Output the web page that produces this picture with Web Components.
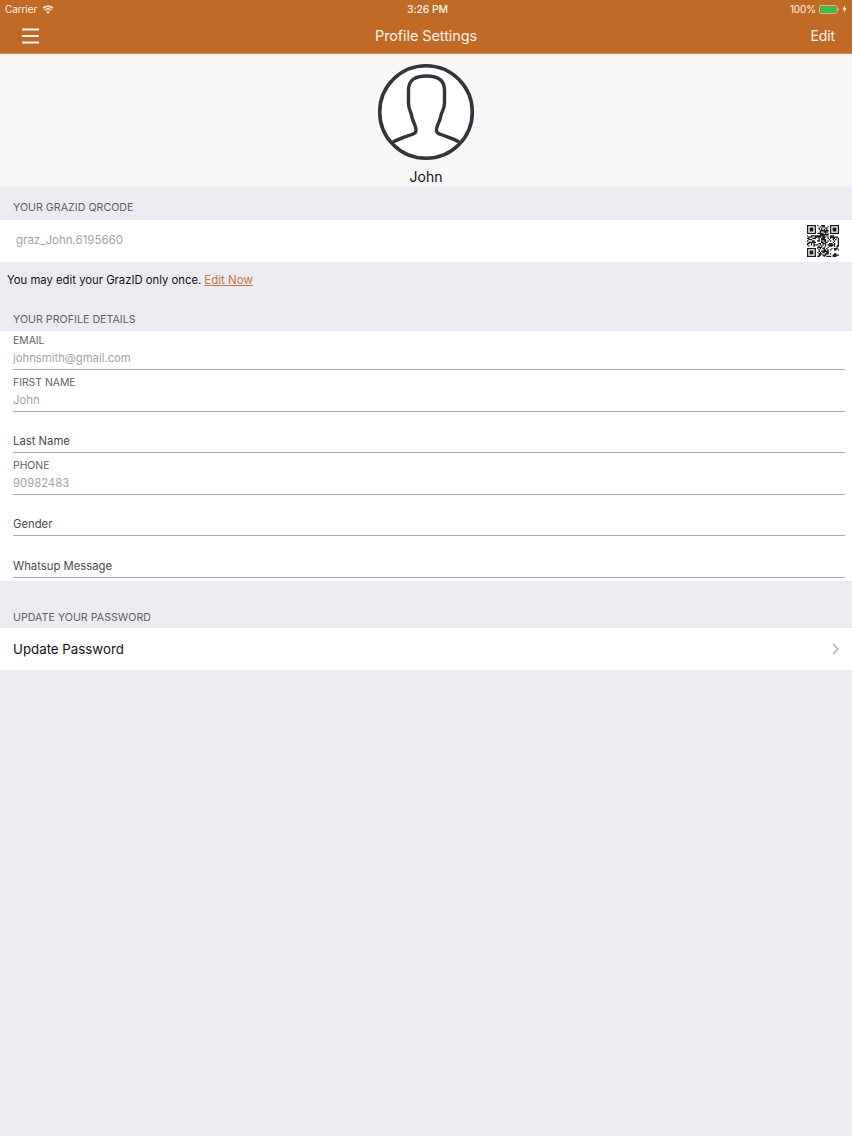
<!DOCTYPE html>
<html lang="en">
<head>
<meta charset="utf-8">
<title>Profile Settings</title>
<style>
  html, body { margin: 0; height: 100%; }
  body {
    background: #ecebf1;
    font-family: Inter, "Liberation Sans", sans-serif;
    -webkit-font-smoothing: antialiased;
  }
</style>
</head>
<body>
<app-nav title="Profile Settings" action="Edit"></app-nav>
<profile-head name="John"></profile-head>

<section-title style="height:34px;padding-bottom:5px">YOUR GRAZID QRCODE</section-title>
<qr-row value="graz_John.6195660"></qr-row>
<edit-notice></edit-notice>

<section-title style="height:34px;padding-bottom:4px">YOUR PROFILE DETAILS</section-title>
<field-list>
  <form-field label="EMAIL" value="johnsmith@gmail.com"></form-field>
  <form-field label="FIRST NAME" value="John"></form-field>
  <form-field placeholder="Last Name"></form-field>
  <form-field label="PHONE" value="90982483"></form-field>
  <form-field placeholder="Gender"></form-field>
  <form-field placeholder="Whatsup Message"></form-field>
</field-list>

<section-title style="height:47px;padding-bottom:3px">UPDATE YOUR PASSWORD</section-title>
<link-row>Update Password</link-row>

<script>
class AppNav extends HTMLElement {
  connectedCallback() {
    this.attachShadow({ mode: "open" });
    this.shadowRoot.innerHTML = `
      <style>
        :host {
          display: block;
          height: 54px;
          box-sizing: border-box;
          background: #c06a28;
          border-bottom: 1px solid #c98a5c;
          color: #fdf3ea;
        }
        #status {
          display: grid;
          grid-template-columns: 1fr auto 1fr;
          align-items: center;
          height: 18px;
          padding: 0 5px;
          font-size: 10px;
          letter-spacing: -0.1px;
        }
        #left { display: flex; align-items: center; gap: 5px; }
        #clock { margin-left: 3px; font-weight: 500; font-size: 10.4px; }
        #right { display: flex; align-items: center; justify-content: flex-end; gap: 3px; }
        #bar {
          display: grid;
          grid-template-columns: 1fr auto 1fr;
          align-items: center;
          height: 35px;
          padding: 0 17px;
        }
        #menu { margin-left: 5px; }
        #title { font-size: 14.5px; letter-spacing: -0.1px; }
        #action { justify-self: end; font-size: 14px; letter-spacing: -0.1px; }
        svg { display: block; }
      </style>
      <div id="status">
        <div id="left">
          <span>Carrier</span>
          <svg width="12" height="9" viewBox="0 0 12 9">
            <path d="M6 8.8 4.2 6.7a2.7 2.7 0 0 1 3.6 0Z" fill="#fdf3ea"/>
            <path d="M2.8 5.2a4.8 4.8 0 0 1 6.4 0M1 3.1a7.6 7.6 0 0 1 10 0" fill="none" stroke="#fdf3ea" stroke-width="1.5"/>
          </svg>
        </div>
        <span id="clock">3:26 PM</span>
        <div id="right">
          <span>100%</span>
          <svg width="20" height="9" viewBox="0 0 20 9">
            <rect x=".5" y=".5" width="17.5" height="8" rx="1.5" fill="none" stroke="#e3c9a8" stroke-width=".8"/>
            <rect x="1.2" y="1.2" width="16" height="6.6" rx="1" fill="#3fbf4a"/>
            <rect x="18.6" y="3" width="1" height="3" fill="#e3c9a8"/>
          </svg>
          <svg width="5" height="8" viewBox="0 0 5 8">
            <path d="M3 0 .4 4.5h1.8L1.7 8l2.9-4.8H2.7Z" fill="#fdf3ea"/>
          </svg>
        </div>
      </div>
      <div id="bar">
        <svg id="menu" width="17" height="16" viewBox="0 0 17 16">
          <path d="M.5 1.6h16M.5 8h16M.5 14.4h16" stroke="#fdf3ea" stroke-width="2" stroke-linecap="round"/>
        </svg>
        <span id="title">${this.getAttribute("title")}</span>
        <span id="action">${this.getAttribute("action")}</span>
      </div>
    `;
  }
}

class ProfileHead extends HTMLElement {
  connectedCallback() {
    this.attachShadow({ mode: "open" });
    this.shadowRoot.innerHTML = `
      <style>
        :host {
          display: flex;
          flex-direction: column;
          align-items: center;
          height: 132px;
          box-sizing: border-box;
          padding-top: 9px;
          background: #f7f7f8;
          color: #111;
        }
        svg { display: block; flex: none; }
        #name { margin-top: 7px; font-size: 14px; line-height: 18px; }
      </style>
      <svg width="98" height="98" viewBox="0 0 98 98">
        <circle cx="49" cy="49" r="46.3" fill="#fff" stroke="#33343c" stroke-width="3.6"/>
        <path d="M16 79C22 75.5 29 73.5 36 71C39.5 70 39.5 67 38.5 64C37.5 60 35 57 34.5 52C33.5 48 31.5 46 31.5 40L31.5 27C31.5 17 38 13 49.5 13C61 13 67.5 17 67.5 27L67.5 40C67.5 46 65 48 64 52C63.5 57 61 60 60 64C59 67 59 70 62.5 71C69 73.5 76 75.5 82 79"
          fill="none" stroke="#33343c" stroke-width="3.4" stroke-linejoin="round"/>
      </svg>
      <div id="name">${this.getAttribute("name")}</div>
    `;
  }
}

class SectionTitle extends HTMLElement {
  connectedCallback() {
    this.attachShadow({ mode: "open" });
    this.shadowRoot.innerHTML = `
      <style>
        :host {
          display: flex;
          align-items: flex-end;
          box-sizing: border-box;
          padding: 0 13px 6px;
          color: #5f5f66;
          font-size: 10.6px;
          line-height: 14px;
          letter-spacing: 0.05px;
        }
      </style>
      <slot></slot>
    `;
  }
}

class QrRow extends HTMLElement {
  connectedCallback() {
    this.attachShadow({ mode: "open" });
    // finder squares plus a fixed pseudo random fill, close enough at this size
    const size = 25;
    let seed = 7;
    let cells = "";
    const inFinder = (x, y) =>
      (x < 8 && y < 8) || (x > 16 && y < 8) || (x < 8 && y > 16);
    for (let y = 0; y < size; y++) {
      for (let x = 0; x < size; x++) {
        seed = (seed * 1103515245 + 12345) & 0x7fffffff;
        if (!inFinder(x, y) && (seed >> 16) % 100 < 52) {
          cells += `M${x} ${y}h1v1h-1z`;
        }
      }
    }
    const finder = (x, y) =>
      `M${x} ${y}h7v7h-7zM${x + 1} ${y + 1}v5h5v-5zM${x + 2} ${y + 2}h3v3h-3z`;
    this.shadowRoot.innerHTML = `
      <style>
        :host {
          display: flex;
          align-items: center;
          justify-content: space-between;
          height: 42px;
          padding: 0 13px 0 16px;
          background: #fff;
          color: #a3a3a8;
          font-size: 11.5px;
        }
        span { margin-bottom: 2px; }
        svg { display: block; }
      </style>
      <span>${this.getAttribute("value")}</span>
      <svg width="32" height="32" viewBox="0 0 25 25">
        <path d="${cells}" fill="#1a1a1a"/>
        <path d="${finder(0, 0)}${finder(18, 0)}${finder(0, 18)}" fill="#1a1a1a" fill-rule="evenodd"/>
      </svg>
    `;
  }
}

class EditNotice extends HTMLElement {
  connectedCallback() {
    this.attachShadow({ mode: "open" });
    this.shadowRoot.innerHTML = `
      <style>
        :host {
          display: flex;
          align-items: center;
          height: 35px;
          padding-left: 7px;
          color: #111;
          font-size: 11.3px;
        }
        a { margin-left: 3px; color: #c47a45; font-size: 11.5px; text-decoration: underline; }
      </style>
      <span>You may edit your GrazID only once.</span>
      <a>Edit Now</a>
    `;
  }
}

class FieldList extends HTMLElement {
  connectedCallback() {
    this.attachShadow({ mode: "open" });
    this.shadowRoot.innerHTML = `
      <style>
        :host {
          display: block;
          background: #fff;
          padding-bottom: 3.5px;
        }
      </style>
      <slot></slot>
    `;
  }
}

class FormField extends HTMLElement {
  connectedCallback() {
    this.attachShadow({ mode: "open" });
    const label = this.getAttribute("label");
    const body = label
      ? `<div id="label">${label}</div><div id="value">${this.getAttribute("value")}</div>`
      : `<div id="placeholder">${this.getAttribute("placeholder")}</div>`;
    this.shadowRoot.innerHTML = `
      <style>
        :host {
          display: flex;
          flex-direction: column;
          justify-content: flex-end;
          height: 41.5px;
          box-sizing: border-box;
          margin: 0 7px 0 13px;
          padding-bottom: 3px;
          border-bottom: 1px solid #a9a9ad;
        }
        :host(:first-child) { height: 39px; }
        #label { color: #5f5f66; font-size: 10.4px; line-height: 15px; margin-bottom: 2px; }
        #value { color: #a3a3a8; font-size: 11.3px; line-height: 16px; }
        #placeholder { color: #4a4a50; font-size: 11.3px; line-height: 16px; }
      </style>
      ${body}
    `;
  }
}

class LinkRow extends HTMLElement {
  connectedCallback() {
    this.attachShadow({ mode: "open" });
    this.shadowRoot.innerHTML = `
      <style>
        :host {
          display: flex;
          align-items: center;
          justify-content: space-between;
          height: 42px;
          padding: 0 13px;
          background: #fff;
          color: #111;
          font-size: 13.3px;
        }
        svg { display: block; }
      </style>
      <span><slot></slot></span>
      <svg width="7" height="12" viewBox="0 0 7 12">
        <path d="M1 1l5 5-5 5" fill="none" stroke="#a8a8ac" stroke-width="1.3"/>
      </svg>
    `;
  }
}

customElements.define("app-nav", AppNav);
customElements.define("profile-head", ProfileHead);
customElements.define("section-title", SectionTitle);
customElements.define("qr-row", QrRow);
customElements.define("edit-notice", EditNotice);
customElements.define("field-list", FieldList);
customElements.define("form-field", FormField);
customElements.define("link-row", LinkRow);
</script>
</body>
</html>
